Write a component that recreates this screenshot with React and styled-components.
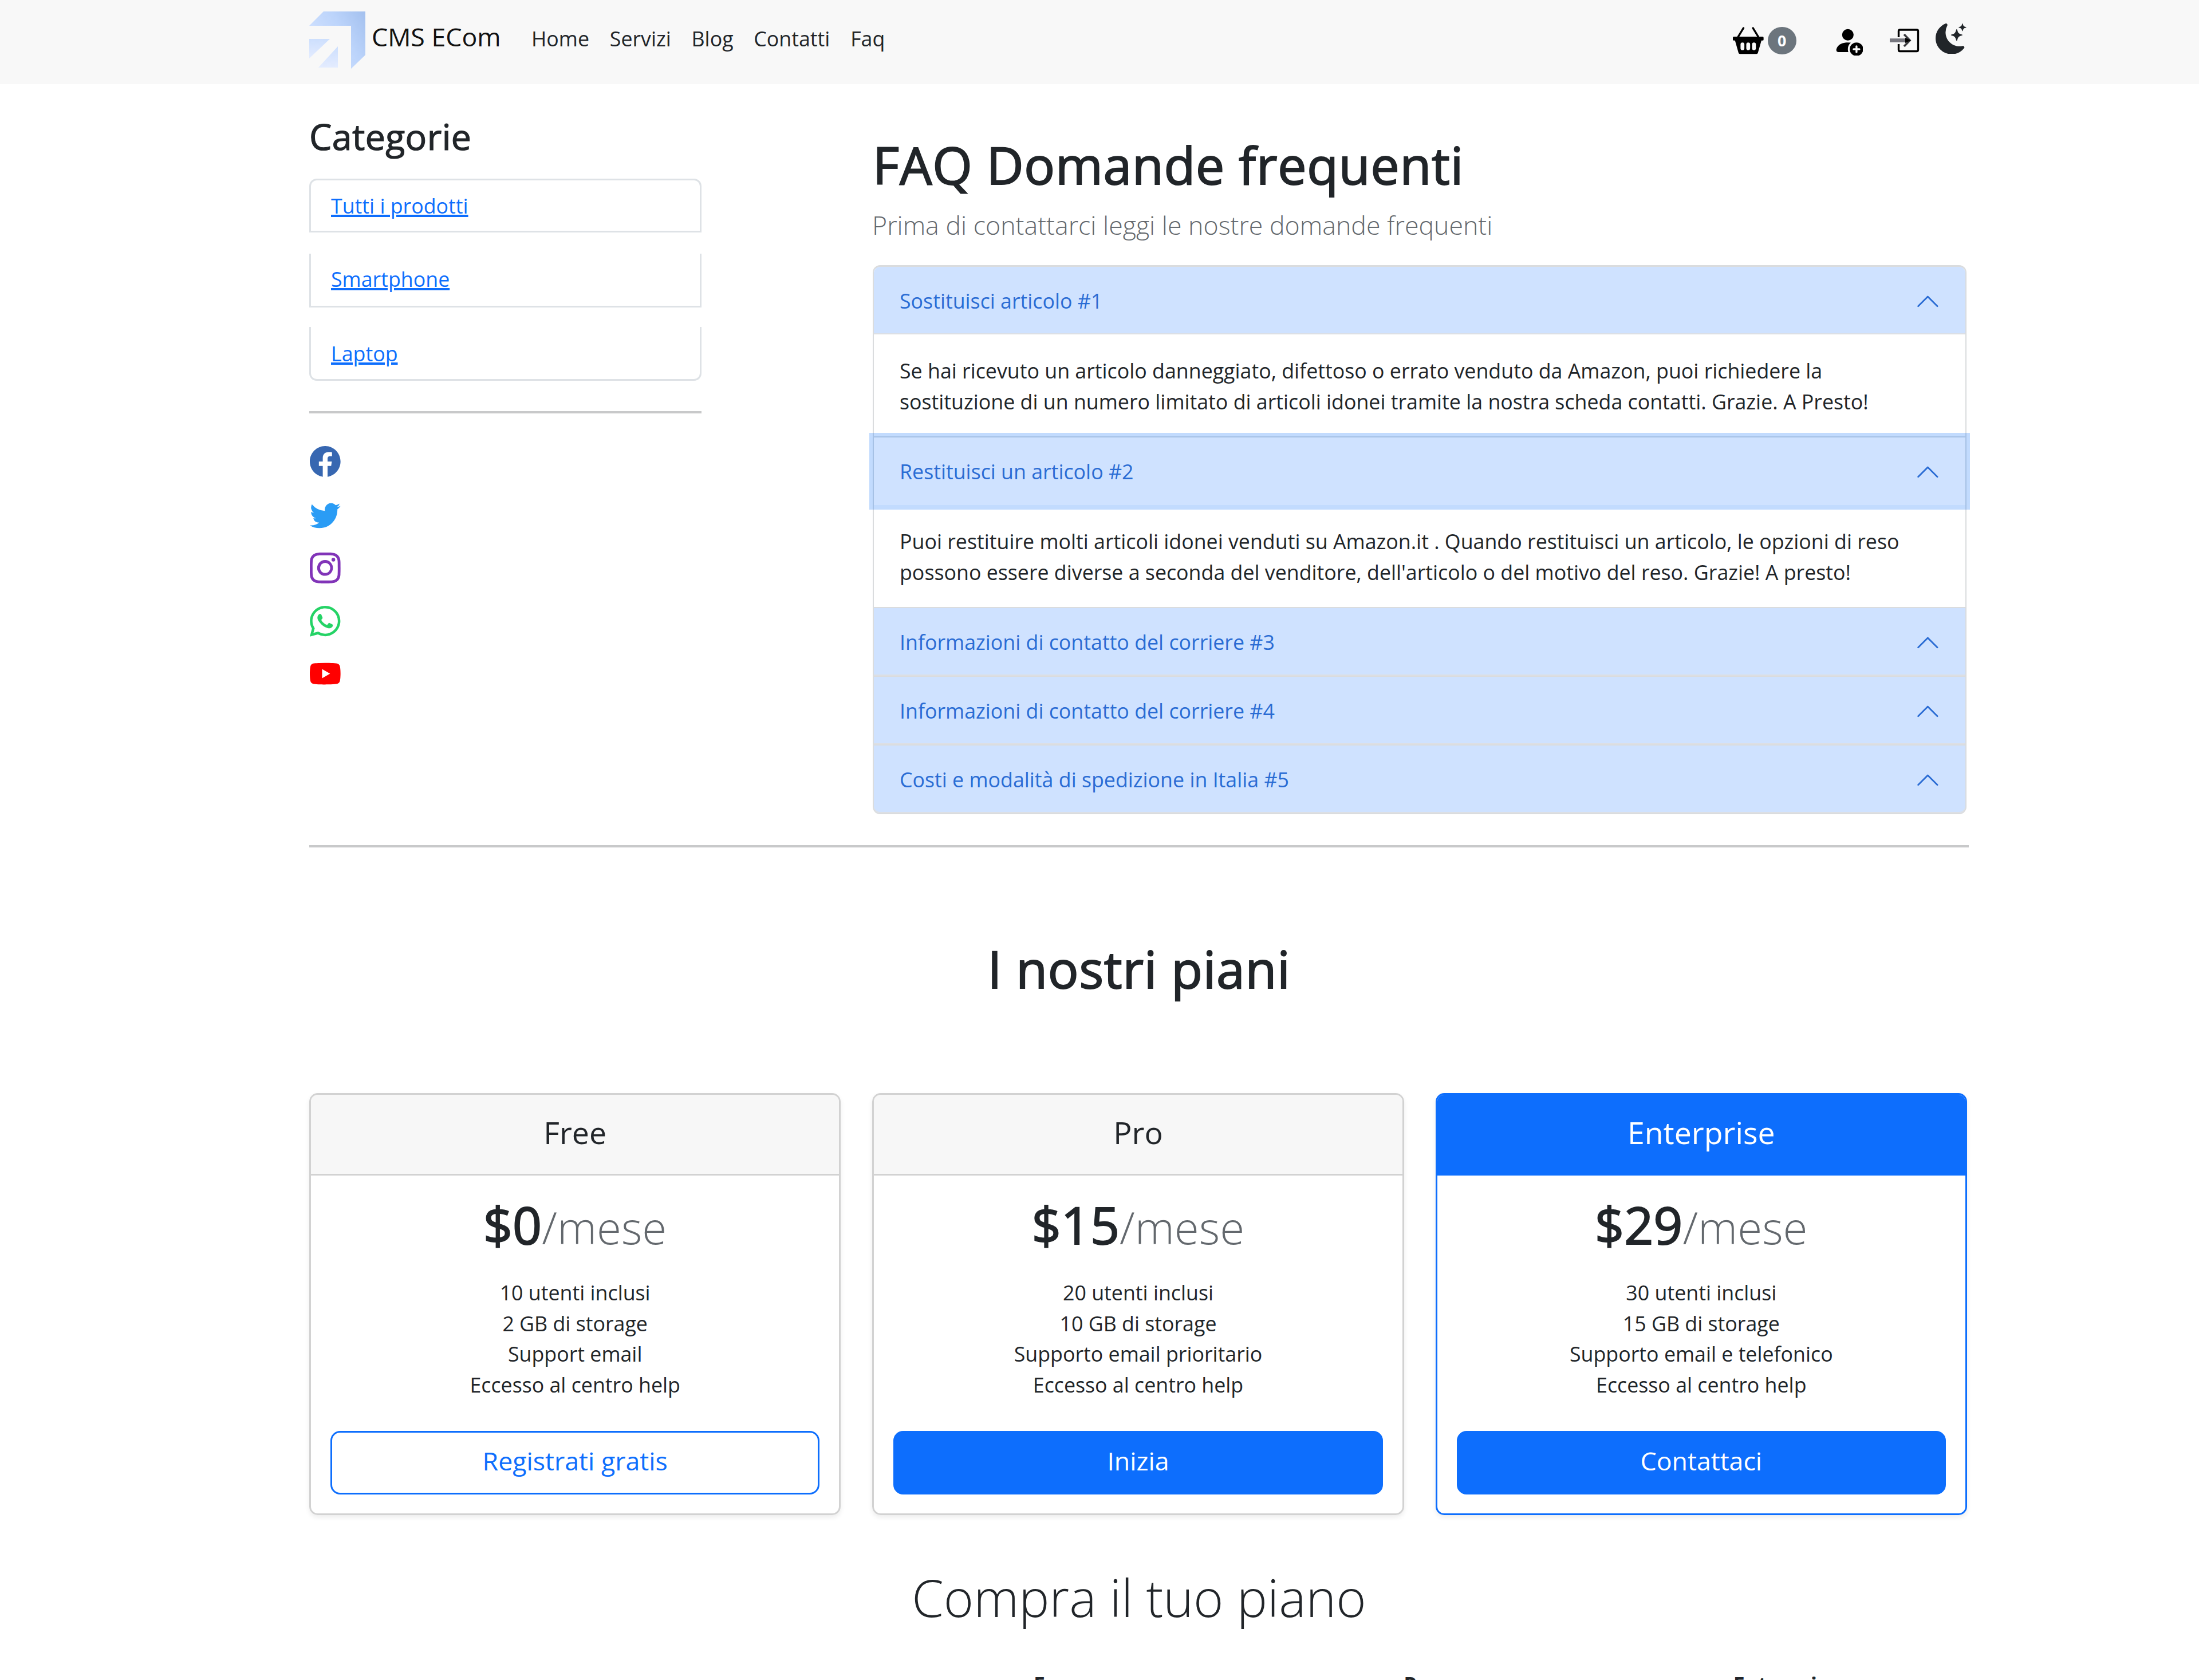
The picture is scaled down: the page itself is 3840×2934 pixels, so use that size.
import styled, { createGlobalStyle } from 'styled-components'
import {
  BsBasket2Fill,
  BsPersonFillAdd,
  BsMoonStarsFill,
  BsFacebook,
  BsTwitter,
  BsInstagram,
  BsWhatsapp,
  BsYoutube,
  BsChevronUp,
} from 'react-icons/bs'

const links = ['Home', 'Servizi', 'Blog', 'Contatti', 'Faq']
const categories = ['Tutti i prodotti', 'Smartphone', 'Laptop']

const socials = [
  { name: 'facebook', color: '#3767b1', Icon: BsFacebook },
  { name: 'twitter', color: '#2a9cf5', Icon: BsTwitter },
  { name: 'instagram', color: '#8134b8', Icon: BsInstagram },
  { name: 'whatsapp', color: '#25d366', Icon: BsWhatsapp },
  { name: 'youtube', color: '#ff0000', Icon: BsYoutube },
]

const faqs = [
  {
    title: 'Sostituisci articolo #1',
    text: [
      'Se hai ricevuto un articolo danneggiato, difettoso o errato venduto da Amazon, puoi richiedere la',
      'sostituzione di un numero limitato di articoli idonei tramite la nostra scheda contatti. Grazie. A Presto!',
    ],
  },
  {
    title: 'Restituisci un articolo #2',
    focus: true,
    text: [
      'Puoi restituire molti articoli idonei venduti su Amazon.it . Quando restituisci un articolo, le opzioni di reso',
      "possono essere diverse a seconda del venditore, dell'articolo o del motivo del reso. Grazie! A presto!",
    ],
  },
  { title: 'Informazioni di contatto del corriere #3' },
  { title: 'Informazioni di contatto del corriere #4' },
  { title: 'Costi e modalità di spedizione in Italia #5' },
]

const plans = [
  {
    name: 'Free',
    price: '$0',
    features: ['10 utenti inclusi', '2 GB di storage', 'Support email', 'Eccesso al centro help'],
    action: 'Registrati gratis',
    outline: true,
  },
  {
    name: 'Pro',
    price: '$15',
    features: ['20 utenti inclusi', '10 GB di storage', 'Supporto email prioritario', 'Eccesso al centro help'],
    action: 'Inizia',
  },
  {
    name: 'Enterprise',
    price: '$29',
    features: ['30 utenti inclusi', '15 GB di storage', 'Supporto email e telefonico', 'Eccesso al centro help'],
    action: 'Contattaci',
    primary: true,
  },
]

const Logo = () => (
  <svg width='98' height='100' viewBox='0 0 98 100'>
    <defs>
      <linearGradient id='fold' x1='0' y1='0.6' x2='1' y2='0'>
        <stop offset='0' stopColor='#d3e3ff' />
        <stop offset='0.55' stopColor='#bcd4fb' />
        <stop offset='1' stopColor='#a3c0ee' />
      </linearGradient>
      <linearGradient id='arrow' x1='0' y1='0' x2='0' y2='1'>
        <stop offset='0' stopColor='#cddffd' />
        <stop offset='1' stopColor='#e4ecff' />
      </linearGradient>
    </defs>
    <path d='M25 0H98V76L73 100V25H0Z' fill='url(#fold)' />
    <path d='M0 48H36L0 82Z' fill='url(#arrow)' />
    <path d='M50 61V98H16Z' fill='url(#arrow)' />
  </svg>
)

const LoginIcon = () => (
  <svg width='52' height='42' viewBox='0 0 52 42' fill='none'>
    <path d='M15.5 15V4Q15.5 2 17.5 2H47Q49.5 2 49.5 4V37Q49.5 39.5 47 39.5H17.5Q15.5 39.5 15.5 37V27' stroke='#000' strokeWidth='3.4' />
    <path d='M0 20.5H30' stroke='#77777f' strokeWidth='6.6' />
    <path d='M25 10L35 20.5L25 31' stroke='#3a3a3e' strokeWidth='3.6' />
    <path d='M27 16L37 20.5L27 25Z' fill='#000' />
  </svg>
)

const App = () => {
  return (
    <Page>
      <GlobalStyle />
      <Navbar>
        <Brand>
          <Logo />
          <span>CMS ECom</span>
        </Brand>
        <NavLinks>
          {links.map((link) => (
            <li key={link}>{link}</li>
          ))}
        </NavLinks>
        <NavIcons>
          <BsBasket2Fill className='basket' />
          <Badge>0</Badge>
          <BsPersonFillAdd className='person' />
          <LoginIcon />
          <BsMoonStarsFill className='moon' />
        </NavIcons>
      </Navbar>

      <Container>
        <Columns>
          <Sidebar>
            <h3>Categorie</h3>
            <CategoryList>
              {categories.map((category) => (
                <li key={category}>
                  <a href='#'>{category}</a>
                </li>
              ))}
            </CategoryList>
            <Divider />
            <Socials>
              {socials.map(({ name, color, Icon }) => (
                <Icon key={name} color={color} />
              ))}
            </Socials>
          </Sidebar>

          <Faq>
            <h1>FAQ Domande frequenti</h1>
            <p className='lead'>Prima di contattarci leggi le nostre domande frequenti</p>
            <Accordion>
              {faqs.map((faq) => (
                <AccordionItem key={faq.title}>
                  <AccordionButton $focus={faq.focus}>
                    {faq.title}
                    <BsChevronUp />
                  </AccordionButton>
                  {faq.text && (
                    <AccordionBody>
                      {faq.text.map((line) => (
                        <div key={line}>{line}</div>
                      ))}
                    </AccordionBody>
                  )}
                </AccordionItem>
              ))}
            </Accordion>
          </Faq>
        </Columns>
        <Divider />

        <PlansTitle>I nostri piani</PlansTitle>
        <Plans>
          {plans.map((plan) => (
            <Card key={plan.name} $primary={plan.primary}>
              <CardHeader $primary={plan.primary}>{plan.name}</CardHeader>
              <CardBody>
                <Price>
                  {plan.price}
                  <small>/mese</small>
                </Price>
                <ul>
                  {plan.features.map((feature) => (
                    <li key={feature}>{feature}</li>
                  ))}
                </ul>
                <Button $outline={plan.outline}>{plan.action}</Button>
              </CardBody>
            </Card>
          ))}
        </Plans>

        <CompareTitle>Compra il tuo piano</CompareTitle>
        <CompareHead>
          <span />
          {plans.map((plan) => (
            <span key={plan.name}>{plan.name}</span>
          ))}
        </CompareHead>
      </Container>
    </Page>
  )
}

const GlobalStyle = createGlobalStyle`
  html {
    font-size: 35.765px;
  }
  body {
    margin: 0;
    background: #fff;
    color: #212529;
    font-family: 'Open Sans', 'Noto Sans', sans-serif;
    line-height: 1.5;
  }
  * {
    box-sizing: border-box;
  }
  h1, h2, h3, p, ul {
    margin: 0;
    padding: 0;
    font-weight: 500;
  }
  /* medium weight headings */
  h1, h2, h3 {
    -webkit-text-stroke: 2px currentColor;
  }
  ul {
    list-style: none;
    font-weight: 400;
  }
  svg {
    display: block;
    flex-shrink: 0;
  }
`

const Page = styled.div`
  width: 3840px;
  height: 2934px;
  overflow: hidden;
`

const Navbar = styled.nav`
  display: flex;
  align-items: flex-start;
  height: 147px;
  padding: 20px 406px 0 540px;
  background: #f8f8f8;
`

const Brand = styled.div`
  display: flex;
  gap: 11px;
  width: 388px;
  font-size: 1.25rem;
  white-space: nowrap;
  color: #111;
  span {
    margin-top: 10px;
  }
`

const NavLinks = styled.ul`
  display: flex;
  gap: 1rem;
  margin-top: 21px;
`

const NavIcons = styled.div`
  display: flex;
  align-items: center;
  height: 101px;
  margin-left: auto;
  color: #000;
  svg + svg {
    margin-left: 47px;
  }
  .basket,
  .person,
  .moon {
    width: 1.5rem;
    height: 1.5rem;
  }
  .person {
    margin-left: 63px;
  }
  .moon {
    margin-left: 28px !important;
    margin-top: -6px;
    color: #212529;
  }
`

const Badge = styled.span`
  width: 50px;
  height: 48px;
  margin-left: 7px;
  border-radius: 50%;
  background: #6c757d;
  color: #fff;
  font-size: 0.75rem;
  font-weight: 700;
  line-height: 47px;
  text-align: center;
`

const Container = styled.main`
  width: 2898px;
  margin-left: 540px;
`

const Columns = styled.div`
  display: flex;
  justify-content: space-between;
  height: 1329px;
  padding-right: 4px;
`

const Divider = styled.hr`
  height: 4px;
  margin: 0;
  border: none;
  background: #c8c9ca;
`

const Sidebar = styled.aside`
  width: 685px;
  h3 {
    margin-top: 53px;
    font-size: 1.75rem;
    line-height: 75px;
    letter-spacing: 0.4px;
    -webkit-text-stroke-width: 1.2px;
  }
  > hr {
    margin-top: 53px;
  }
`

const CategoryList = styled.ul`
  margin-top: 37px;
  li {
    height: 94px;
    padding: 18px 35px;
    border: 3px solid #dee2e6;
    border-top-width: 0;
    margin-bottom: 34px;
  }
  li:first-child {
    border-top-width: 3px;
    border-radius: 13px 13px 0 0;
    margin-bottom: 37px;
  }
  li:last-child {
    padding-top: 20px;
    border-radius: 0 0 13px 13px;
    margin-bottom: 0;
  }
  a {
    color: #0d6efd;
    text-decoration-thickness: 4px;
  }
`

const Socials = styled.div`
  display: flex;
  flex-direction: column;
  gap: 39.4px;
  margin-top: 57px;
  padding-left: 1px;
  svg {
    width: 1.5rem;
    height: 1.5rem;
  }
`

const Faq = styled.section`
  width: 1910px;
  h1 {
    margin-top: 86px;
    font-size: 2.5rem;
    line-height: 108px;
    letter-spacing: 0.8px;
  }
  .lead {
    margin-top: 18px;
    margin-left: -1px;
    font-size: 1.25rem;
    font-weight: 300;
    color: #63686d;
  }
`

const Accordion = styled.div`
  margin-top: 37px;
`

const AccordionItem = styled.div`
  border: 2px solid #dadcde;
  border-top-width: 0;
  &:first-child {
    border-top-width: 3px;
    border-radius: 13px 13px 0 0;
  }
  &:first-child > :first-child {
    border-radius: 11px 11px 0 0;
  }
  &:last-child {
    border-radius: 0 0 13px 13px;
  }
  &:last-child > :first-child {
    border-radius: 0 0 11px 11px;
  }
`

const AccordionButton = styled.div`
  display: flex;
  align-items: center;
  justify-content: space-between;
  height: 118px;
  padding: 1px 43px 0 45px;
  background: #cfe2ff;
  color: #2a6cd4;
  box-shadow: ${({ $focus }) =>
    $focus ? '0 0 0 8px rgba(13, 110, 253, 0.25)' : 'inset 0 -2px 0 #dcdfe4'};
  svg {
    width: 1.25rem;
    height: 1.25rem;
    margin-top: 2px;
  }
`

const AccordionBody = styled.div`
  height: 178px;
  padding: 37px 45px 0;
  white-space: nowrap;
`

const PlansTitle = styled.h2`
  margin-top: 157px;
  font-size: 2.5rem;
  line-height: 108px;
  letter-spacing: 0.8px;
  text-align: center;
`

const Plans = styled.div`
  display: grid;
  grid-template-columns: repeat(3, 1fr);
  gap: 55px;
  margin-top: 164px;
  padding-right: 3px;
  text-align: center;
`

const Card = styled.div`
  height: 737px;
  border: 3px solid ${({ $primary }) => ($primary ? '#0d6efd' : '#d2d2d2')};
  border-radius: 15px;
  box-shadow: 0 4px 9px rgba(0, 0, 0, 0.075);
`

const CardHeader = styled.div`
  height: 141px;
  padding-top: 26px;
  border-bottom: 3px solid ${({ $primary }) => ($primary ? '#0d6efd' : '#d2d2d2')};
  border-radius: 12px 12px 0 0;
  background: ${({ $primary }) => ($primary ? '#0d6efd' : '#f7f7f7')};
  color: ${({ $primary }) => ($primary ? '#fff' : '#212529')};
  font-size: 1.5rem;
`

const CardBody = styled.div`
  padding: 31px 34px 0;
  ul {
    margin-top: 34px;
  }
`

const Price = styled.h1`
  font-size: 2.5rem;
  line-height: 108px;
  small {
    color: #63686d;
    font-size: 0.875em;
    font-weight: 300;
    -webkit-text-stroke-width: 0;
  }
`

const Button = styled.div`
  height: 111px;
  margin-top: 53px;
  border: 3px solid #0d6efd;
  border-radius: 17px;
  background: ${({ $outline }) => ($outline ? '#fff' : '#0d6efd')};
  color: ${({ $outline }) => ($outline ? '#0d6efd' : '#fff')};
  font-size: 1.25rem;
  line-height: 97px;
`

const CompareTitle = styled.h2`
  margin-top: 89px;
  font-size: 2.5rem;
  font-weight: 300;
  line-height: 108px;
  text-align: center;
  -webkit-text-stroke-width: 0;
`

const CompareHead = styled.div`
  display: grid;
  grid-template-columns: 34% 22% 22% 22%;
  margin-top: 72px;
  font-weight: 700;
  text-align: center;
`

export default App
